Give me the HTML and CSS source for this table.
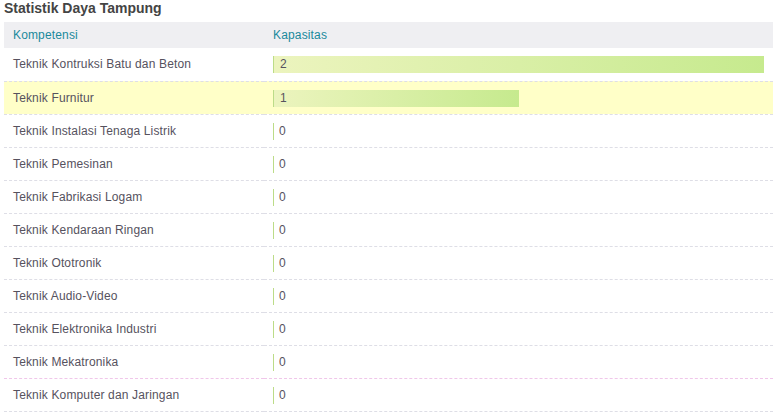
FILE: index.html
```html
<!DOCTYPE html>
<html>
<head>
<meta charset="utf-8">
<link rel="stylesheet" href="styles.css">
</head>
<body>
<div class="panel">
  <h2 class="title">Statistik Daya Tampung</h2>
  <table class="stats">
    <thead>
      <tr><th class="c1">Kompetensi</th><th class="c2">Kapasitas</th></tr>
    </thead>
    <tbody>
      <tr><td>Teknik Kontruksi Batu dan Beton</td><td><div class="bar" style="width:100%">2</div></td></tr>
      <tr class="hl"><td>Teknik Furnitur</td><td><div class="bar" style="width:50%">1</div></td></tr>
      <tr><td>Teknik Instalasi Tenaga Listrik</td><td><div class="bar zero">0</div></td></tr>
      <tr><td>Teknik Pemesinan</td><td><div class="bar zero">0</div></td></tr>
      <tr><td>Teknik Fabrikasi Logam</td><td><div class="bar zero">0</div></td></tr>
      <tr><td>Teknik Kendaraan Ringan</td><td><div class="bar zero">0</div></td></tr>
      <tr><td>Teknik Ototronik</td><td><div class="bar zero">0</div></td></tr>
      <tr><td>Teknik Audio-Video</td><td><div class="bar zero">0</div></td></tr>
      <tr><td>Teknik Elektronika Industri</td><td><div class="bar zero">0</div></td></tr>
      <tr class="pink"><td>Teknik Mekatronika</td><td><div class="bar zero">0</div></td></tr>
      <tr><td>Teknik Komputer dan Jaringan</td><td><div class="bar zero">0</div></td></tr>
    </tbody>
  </table>
</div>
</body>
</html>
```
FILE: styles.css
```css
html, body {
  margin: 0;
  padding: 0;
  background: #ffffff;
}
body {
  font-family: "Liberation Sans", Arial, sans-serif;
  font-size: 12px;
  letter-spacing: 0.15px;
  color: #56525e;
}
.panel {
  padding: 0 4px;
}
.title {
  margin: 0;
  height: 22px;
  line-height: 16px;
  font-size: 14px;
  letter-spacing: 0;
  font-weight: bold;
  color: #444444;
}
.stats {
  width: 769px;
  border-collapse: collapse;
  table-layout: fixed;
}
.stats th {
  height: 26px;
  padding: 0 9px;
  background: #efeff2;
  color: #1a8a9c;
  font-weight: normal;
  text-align: left;
  box-sizing: border-box;
}
.stats th.c1 { width: 260px; }
.stats td {
  height: 33px;
  padding: 0 9px;
  box-sizing: border-box;
  border-bottom: 1px dashed #dedee6;
  vertical-align: middle;
}
.stats tr.hl td {
  background: #ffffc8;
}
.stats tr.pink td {
  border-bottom-color: #f0c6ea;
}
.bar {
  height: 17px;
  line-height: 17px;
  box-sizing: border-box;
  padding-left: 6px;
  border-left: 1px solid #bcdc88;
  background: linear-gradient(to right, #ecf4be, #c6ea8e);
  margin-top: 1px;
}
.bar.zero {
  width: 0;
  background: none;
  white-space: nowrap;
  padding-left: 5px;
}
```
